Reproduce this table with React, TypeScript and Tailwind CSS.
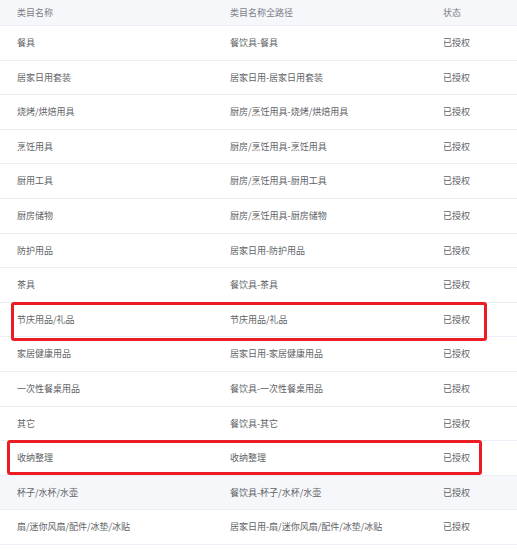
const rows: [string, string][] = [
  ['餐具', '餐饮具-餐具'],
  ['居家日用套装', '居家日用-居家日用套装'],
  ['烧烤/烘焙用具', '厨房/烹饪用具-烧烤/烘焙用具'],
  ['烹饪用具', '厨房/烹饪用具-烹饪用具'],
  ['厨用工具', '厨房/烹饪用具-厨用工具'],
  ['厨房储物', '厨房/烹饪用具-厨房储物'],
  ['防护用品', '居家日用-防护用品'],
  ['茶具', '餐饮具-茶具'],
  ['节庆用品/礼品', '节庆用品/礼品'],
  ['家居健康用品', '居家日用-家居健康用品'],
  ['一次性餐桌用品', '餐饮具-一次性餐桌用品'],
  ['其它', '餐饮具-其它'],
  ['收纳整理', '收纳整理'],
  ['杯子/水杯/水壶', '餐饮具-杯子/水杯/水壶'],
  ['扇/迷你风扇/配件/冰垫/冰贴', '居家日用-扇/迷你风扇/配件/冰垫/冰贴'],
]

export default function App() {
  return (
    <div
      className="relative w-[517px] h-[550px] bg-white overflow-hidden text-[9px] text-[#606266]"
      style={{ fontFamily: '"Noto Sans CJK SC", "Noto Sans", sans-serif' }}
    >
      <div className="grid grid-cols-[213px_213px_1fr] h-[26px] items-center bg-[#f5f7fa] text-[#7d8087] border-b border-[#ebeef5]">
        <div className="pl-[17px]">类目名称</div>
        <div className="pl-[17px]">类目名称全路径</div>
        <div className="pl-[17px]">状态</div>
      </div>
      {rows.map(([name, path], i) => (
        <div
          key={name}
          className={`grid grid-cols-[213px_213px_1fr] h-[34.6px] items-center border-b border-[#ebeef5] ${
            i === 13 ? 'bg-[#f5f7fa]' : 'bg-white'
          }`}
        >
          <div className="pl-[17px]">{name}</div>
          <div className="pl-[17px]">{path}</div>
          <div className="pl-[17px]">已授权</div>
        </div>
      ))}

      {/* annotation boxes */}
      <div className="absolute left-[11px] top-[302px] w-[476px] h-[39px] border-[3px] border-[#ec1c24] rounded-[3px]" />
      <div className="absolute left-[7px] top-[440px] w-[475px] h-[35px] border-[3px] border-[#ec1c24] rounded-[3px]" />
    </div>
  )
}
